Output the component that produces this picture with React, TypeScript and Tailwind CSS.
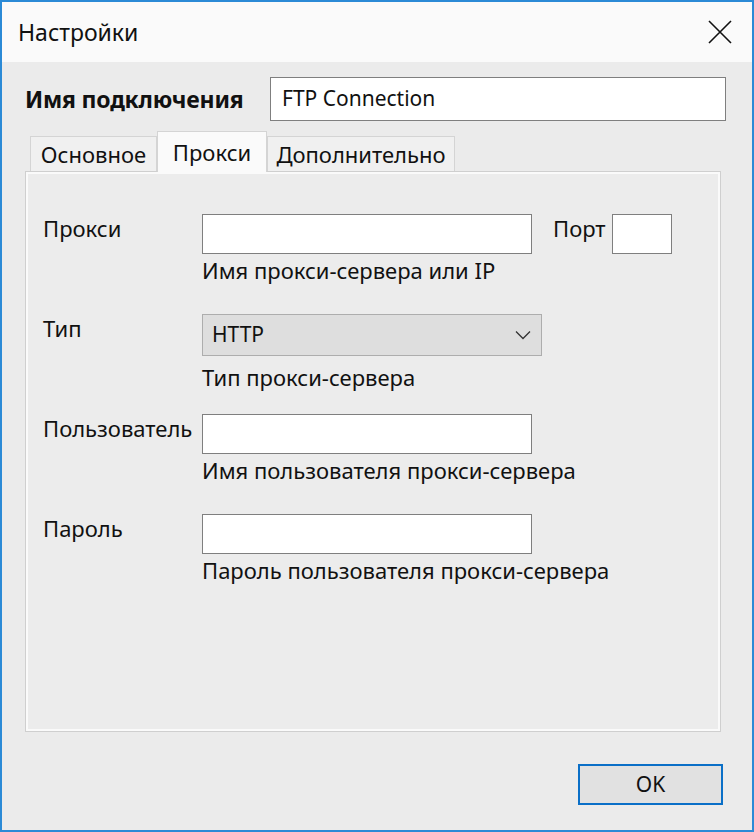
import React from 'react';

const font = { fontFamily: '"Noto Sans", "Open Sans", sans-serif' };

function Field({
  label,
  hint,
  hintGap = 'mt-[3px]',
  children,
}: {
  label: string;
  hint: string;
  hintGap?: string;
  children: React.ReactNode;
}) {
  return (
    <div className="h-[100px] flex items-start">
      <div className="w-[159px] pt-[1px] text-[22px] leading-[26px] text-[#111]">{label}</div>
      <div className="flex flex-col">
        {children}
        <div className={`${hintGap} text-[22px] leading-[26px] text-[#111]`}>{hint}</div>
      </div>
    </div>
  );
}

function TextBox() {
  return <div className="w-[330px] h-[40px] border border-[#7f7f7f] bg-white" />;
}

export default function App() {
  return (
    <div
      className="w-[754px] h-[832px] flex flex-col border-2 border-[#2b8ad6] bg-[#ebebeb] overflow-hidden"
      style={font}
    >
      {/* заголовок окна */}
      <div className="h-[60px] bg-[#fafafa] flex items-center justify-between pl-[16px] pr-[18px]">
        <span className="text-[23px] text-[#111]">Настройки</span>
        <svg width="24" height="24" viewBox="0 0 24 24" className="mr-[2px]">
          <path d="M1 1 L23 23 M23 1 L1 23" stroke="#111" strokeWidth="1.6" fill="none" />
        </svg>
      </div>

      <div className="flex-1 flex flex-col px-[23px] pt-[15px]">
        {/* имя подключения */}
        <div className="flex items-center">
          <div className="w-[245px] text-[23px] font-bold text-[#111] tracking-[-0.2px]">Имя подключения</div>
          <div className="w-[456px] h-[44px] border border-[#7f7f7f] bg-white flex items-center pl-[11px] text-[21px] text-[#111]">
            FTP Connection
          </div>
        </div>

        {/* вкладки */}
        <div className="mt-[10px] flex items-end pl-[5px] h-[40px]">
          <div className="h-[35px] w-[127px] border border-b-0 border-[#d4d4d4] bg-[#f0f0f0] flex items-center justify-center text-[22px] text-[#111]">
            Основное
          </div>
          <div className="h-[41px] w-[110px] border border-b-0 border-[#d4d4d4] bg-[#fafafa] flex items-center justify-center text-[22px] text-[#111] -mb-[1px] relative z-10">
            Прокси
          </div>
          <div className="h-[35px] w-[188px] border border-b-0 border-[#d4d4d4] bg-[#f0f0f0] flex items-center justify-center text-[22px] text-[#111]">
            Дополнительно
          </div>
        </div>

        {/* панель вкладки */}
        <div className="w-[696px] h-[561px] border border-[#cfcfcf] shadow-[inset_0_0_0_2px_#fafafa] bg-[#ececec] flex flex-col pt-[42px] pl-[17px]">
          <Field label="Прокси" hint="Имя прокси-сервера или IP">
            <div className="flex items-start">
              <TextBox />
              <span className="ml-[21px] pt-[1px] text-[22px] leading-[26px] text-[#111]">Порт</span>
              <div className="ml-[6px] w-[60px] h-[40px] border border-[#7f7f7f] bg-white" />
            </div>
          </Field>

          <Field label="Тип" hint="Тип прокси-сервера" hintGap="mt-[8px]">
            <div className="w-[340px] h-[42px] border border-[#adadad] bg-[#dedede] flex items-center justify-between pl-[9px] pr-[10px] text-[21px] text-[#111]">
              <span>HTTP</span>
              <svg width="16" height="10" viewBox="0 0 16 10">
                <path d="M1 1.5 L8 8.5 L15 1.5" stroke="#333" strokeWidth="1.3" fill="none" />
              </svg>
            </div>
          </Field>

          <Field label="Пользователь" hint="Имя пользователя прокси-сервера">
            <TextBox />
          </Field>

          <Field label="Пароль" hint="Пароль пользователя прокси-сервера">
            <TextBox />
          </Field>
        </div>

        {/* кнопка */}
        <div className="flex justify-end pr-[6px] mt-[32px]">
          <button className="w-[145px] h-[41px] border-2 border-[#0a6fc7] bg-[#e1e1e1] text-[21px] text-[#111]">
            OK
          </button>
        </div>
      </div>
    </div>
  );
}
